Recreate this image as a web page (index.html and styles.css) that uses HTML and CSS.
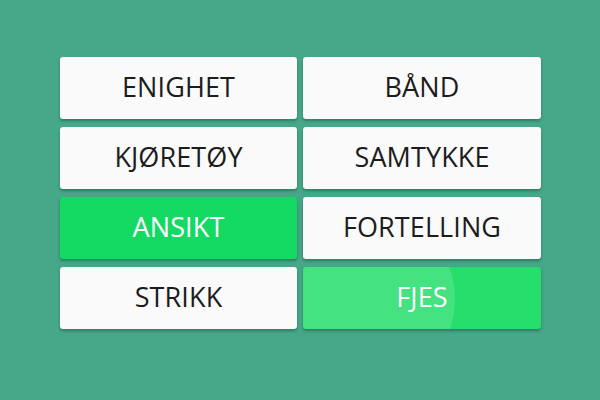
FILE: index.html
```html
<!DOCTYPE html>
<html>
<head>
<meta charset="utf-8">
<link rel="stylesheet" href="styles.css">
</head>
<body>
<div class="grid">
  <button class="tile">ENIGHET</button>
  <button class="tile">BÅND</button>
  <button class="tile">KJØRETØY</button>
  <button class="tile">SAMTYKKE</button>
  <button class="tile selected">ANSIKT</button>
  <button class="tile">FORTELLING</button>
  <button class="tile">STRIKK</button>
  <button class="tile matched"><span class="ripple"></span><span class="label">FJES</span></button>
</div>
</body>
</html>
```
FILE: styles.css
```css
html, body {
  margin: 0;
  padding: 0;
  width: 600px;
  height: 400px;
  background: #46a889;
  overflow: hidden;
}
.grid {
  display: grid;
  grid-template-columns: 237px 238px;
  grid-auto-rows: 62px;
  column-gap: 6px;
  row-gap: 8px;
  padding: 57px 0 0 60px;
}
.tile {
  position: relative;
  overflow: hidden;
  border: none;
  border-radius: 3px;
  background: #fafafa;
  color: #1c1c1c;
  font-family: "Open Sans", sans-serif;
  font-size: 27px;
  letter-spacing: 0.1px;
  box-shadow: 0 2px 3px rgba(0, 40, 25, 0.35);
  padding: 0 0 3px 0;
  margin: 0;
}
.selected {
  background: #14d962;
  color: #fff;
}
.matched {
  background: #26de6c;
  color: #fff;
}
.ripple {
  position: absolute;
  left: -28px;
  top: -58px;
  width: 180px;
  height: 180px;
  border-radius: 50%;
  background: rgba(255, 255, 255, 0.14);
}
.label {
  position: relative;
}
```
